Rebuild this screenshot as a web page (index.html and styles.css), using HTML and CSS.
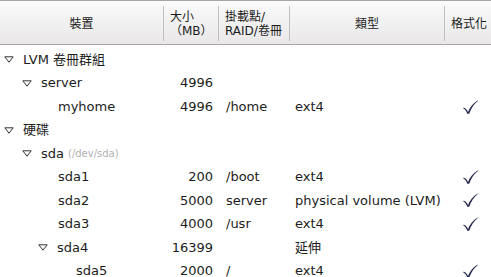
FILE: index.html
```html
<!DOCTYPE html>
<html>
<head>
    <meta charset="utf-8" />
    <title>Partitions</title>
    <link rel="stylesheet" href="styles.css">
</head>
<body>

<div class="tree">
    <div class="head">
        <div class="hcell center">裝置</div>
        <div class="hcell">大小<br>（MB）</div>
        <div class="hcell">掛載點/<br>RAID/卷冊</div>
        <div class="hcell center">類型</div>
        <div class="hcell">格式化</div>
    </div>

    <div class="row">
        <div class="dev lv0"><span class="tog"></span>LVM 卷冊群組</div>
        <div class="size"></div><div class="mnt"></div><div class="type"></div><div class="fmt"></div>
    </div>
    <div class="row">
        <div class="dev lv1"><span class="tog"></span>server</div>
        <div class="size">4996</div><div class="mnt"></div><div class="type"></div><div class="fmt"></div>
    </div>
    <div class="row">
        <div class="dev lv2">myhome</div>
        <div class="size">4996</div><div class="mnt">/home</div><div class="type">ext4</div><div class="fmt"><span class="check"></span></div>
    </div>
    <div class="row">
        <div class="dev lv0"><span class="tog"></span>硬碟</div>
        <div class="size"></div><div class="mnt"></div><div class="type"></div><div class="fmt"></div>
    </div>
    <div class="row">
        <div class="dev lv1"><span class="tog"></span>sda <span class="path">(/dev/sda)</span></div>
        <div class="size"></div><div class="mnt"></div><div class="type"></div><div class="fmt"></div>
    </div>
    <div class="row">
        <div class="dev lv2">sda1</div>
        <div class="size">200</div><div class="mnt">/boot</div><div class="type">ext4</div><div class="fmt"><span class="check"></span></div>
    </div>
    <div class="row">
        <div class="dev lv2">sda2</div>
        <div class="size">5000</div><div class="mnt">server</div><div class="type">physical volume (LVM)</div><div class="fmt"><span class="check"></span></div>
    </div>
    <div class="row">
        <div class="dev lv2">sda3</div>
        <div class="size">4000</div><div class="mnt">/usr</div><div class="type">ext4</div><div class="fmt"><span class="check"></span></div>
    </div>
    <div class="row">
        <div class="dev lv2"><span class="tog"></span>sda4</div>
        <div class="size">16399</div><div class="mnt"></div><div class="type">延伸</div><div class="fmt"></div>
    </div>
    <div class="row">
        <div class="dev lv3">sda5</div>
        <div class="size">2000</div><div class="mnt">/</div><div class="type">ext4</div><div class="fmt"><span class="check"></span></div>
    </div>
</div>

</body>
</html>
```

FILE: styles.css
```css
body, html {
    margin: 0;
    padding: 0;
    width: 100%;
    height: 100%;
    overflow: hidden;
    background: #ffffff;
    font-family: "DejaVu Sans", "Noto Sans CJK TC", sans-serif;
    font-size: 13px;
    color: #1c1c1c;
}
.tree {
    width: 491px;
}
.head, .row {
    display: grid;
    grid-template-columns: 163px 55px 71px 155px 47px;
}
.head {
    height: 45px;
    box-sizing: border-box;
    padding: 5px 0 3px;
    border-top: 1px solid #aaa5a5;
    border-bottom: 1px solid #aaa5a5;
    background: linear-gradient(#fbfbfb, #e9e7e7);
    margin-bottom: 3px;
}
.hcell {
    display: flex;
    flex-direction: column;
    justify-content: center;
    padding-left: 6px;
    line-height: 14px;
    font-size: 12px;
    border-left: 1px solid #c2bebe;
    white-space: nowrap;
}
.hcell:first-child {
    border-left: none;
}
.hcell.center {
    align-items: center;
    padding-left: 0;
}
.row {
    height: 23.45px;
    line-height: 23.45px;
    white-space: nowrap;
}
.dev {
    display: flex;
    align-items: center;
}
.lv0 { padding-left: 4px; }
.lv1 { padding-left: 22px; }
.lv2 { padding-left: 58px; }
.lv2 .tog { margin-left: -20px; }
.lv3 { padding-left: 76px; }
.tog {
    width: 10px;
    height: 7px;
    margin-right: 9px;
    background: no-repeat center/10px 7px url("data:image/svg+xml,%3Csvg xmlns='http://www.w3.org/2000/svg' width='10' height='7' viewBox='0 0 10 7'%3E%3Cpath d='M0.8 0.8 H9.2 L5 6.2 Z' fill='none' stroke='%23333' stroke-width='1'/%3E%3C/svg%3E");
}
.path {
    font-size: 10px;
    color: #b0b0b0;
    margin-left: 4px;
}
.size {
    text-align: right;
    padding-right: 5px;
}
.mnt {
    padding-left: 8px;
}
.type {
    padding-left: 6px;
}
.fmt {
    display: flex;
    align-items: center;
    padding-left: 19px;
}
.check {
    width: 15px;
    height: 14px;
    background: no-repeat center/15px 14px url("data:image/svg+xml,%3Csvg xmlns='http://www.w3.org/2000/svg' width='14' height='13' viewBox='0 0 14 13'%3E%3Cpath d='M0.3 7.1 C2 7 3.6 8.6 4.7 11.2 C6.5 6.6 9.4 2.8 13.6 0.4 L13.9 1 C10.2 4 7.5 8 5.8 12.8 L4 12.8 C3.2 10.3 2 8.4 0.3 7.8 Z' fill='%23262a4e'/%3E%3C/svg%3E");
}
```
